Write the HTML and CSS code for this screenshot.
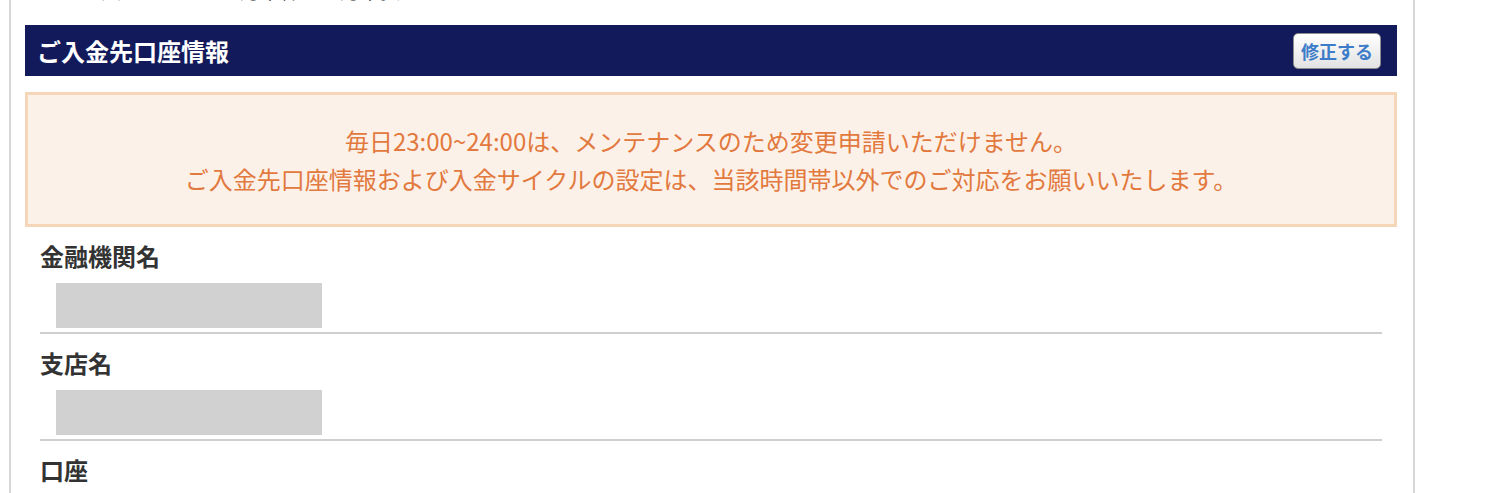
FILE: index.html
```html
<!DOCTYPE html>
<html lang="ja">
<head>
<meta charset="utf-8">
<title>ご入金先口座情報</title>
<link rel="stylesheet" href="styles.css">
</head>
<body>
<div class="page">
  <p class="lead">ご入金サイクル：月末締め翌月末払い</p>
  <section class="panel">
    <div class="panel-head">
      <h2 class="panel-title">ご入金先口座情報</h2>
      <button class="edit-btn" type="button">修正する</button>
    </div>
    <div class="notice">
      <p>毎日23:00~24:00は、メンテナンスのため変更申請いただけません。</p>
      <p>ご入金先口座情報および入金サイクルの設定は、当該時間帯以外でのご対応をお願いいたします。</p>
    </div>
    <dl class="fields">
      <div class="field">
        <dt class="field-label">金融機関名</dt>
        <dd class="field-value"><span class="masked"></span></dd>
      </div>
      <div class="field">
        <dt class="field-label">支店名</dt>
        <dd class="field-value"><span class="masked"></span></dd>
      </div>
      <div class="field">
        <dt class="field-label">口座</dt>
        <dd class="field-value"><span class="masked"></span></dd>
      </div>
    </dl>
  </section>
</div>
</body>
</html>
```
FILE: styles.css
```css
* { box-sizing: border-box; }

html, body {
  margin: 0;
  padding: 0;
  background: #ffffff;
  font-family: "Noto Sans CJK JP", "Noto Sans", sans-serif;
  color: #333333;
}

.page {
  margin-left: 9px;
  width: 1406px;
  min-height: 100vh;
  border-left: 2px solid #d6d6d6;
  border-right: 2px solid #d6d6d6;
  padding: 0 16px 0 14px;
}

.lead {
  margin: -22px 0 0 56px;
  font-size: 20px;
  line-height: 26px;
  color: #222222;
}

.panel { margin-top: 21px; }

.panel-head {
  height: 51px;
  background: #121a5c;
  display: flex;
  align-items: center;
  justify-content: space-between;
  padding: 0 16px 0 12px;
}

.panel-title {
  margin: 0;
  color: #ffffff;
  font-size: 24px;
  font-weight: 700;
  line-height: 30px;
}

.edit-btn {
  width: 88px;
  height: 36px;
  padding: 0;
  border: 1px solid #8c8c8c;
  border-radius: 5px;
  background: linear-gradient(#ffffff, #e2e2e2);
  color: #3d7cc8;
  font-family: inherit;
  font-size: 18px;
  font-weight: 700;
  line-height: 1;
}

.notice {
  margin-top: 16px;
  border: 3px solid #f6d6b9;
  background: #fcf1e8;
  padding: 27px 10px 26px;
  text-align: center;
  color: #e2793e;
  font-size: 24px;
  line-height: 38px;
}

.notice p { margin: 0; }

.fields {
  margin: 0 15px;
}

.field {
  padding: 12px 0 4px;
  border-bottom: 2px solid #cfcfcf;
}

.field-label {
  font-size: 24px;
  font-weight: 700;
  line-height: 34px;
  color: #333333;
}

.field-value {
  margin: 10px 0 0 16px;
}

.masked {
  display: block;
  width: 266px;
  height: 45px;
  background: #d1d1d1;
}
```
